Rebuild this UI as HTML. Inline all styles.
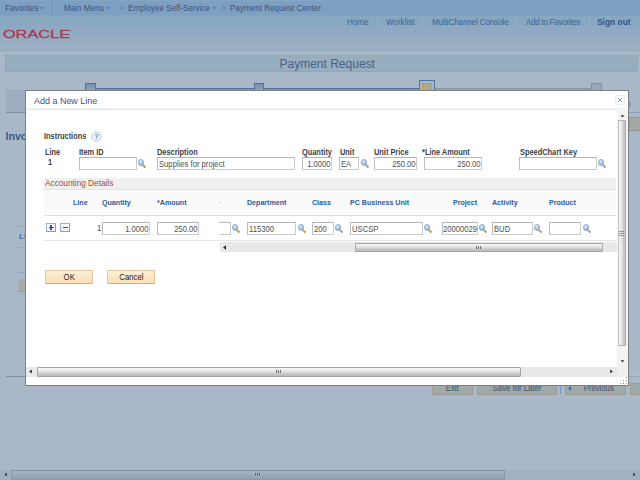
<!DOCTYPE html>
<html lang="en">
<head>
<meta charset="utf-8">
<title>Payment Request</title>
<style>
*{box-sizing:border-box;margin:0;padding:0}
html,body{width:640px;height:480px;overflow:hidden}
body{position:relative;background:#a9b8c8;font-family:"Liberation Sans",sans-serif;font-size:8px;color:#3c4656;line-height:1}
.a{position:absolute;white-space:nowrap}
/* ---------- dimmed page behind the dialog ---------- */
#top{left:0;top:0;width:640px;height:56px;background:linear-gradient(to bottom,
 #8ba8c6 0,#7fa1c3 1px,#7d9fc2 2px,#7d9fc2 14px,#80a2c2 15px,
 #87a8c0 16px,#87a8bf 25px,#8fa8c1 26px,#92a9c2 34px,
 #8eabc0 34px,#8eabc0 35px,#9aaac6 36px,#9aaac6 37px,
 #96adbf 37px,#96adbf 42px,#9bafc7 43px,#9bafc7 46px,#9eb0c7 47px,#9eb0c7 49px,
 #95b0be 49px,#95b0be 50px,#9aabb9 51px,#a9b8c9 52px,#a9b8c9 56px)}
#nav span{top:4.45px;font-size:8.8px;color:#40537a;transform:scaleX(.92);transform-origin:0 0}
#nav span.gt{transform:scale(.62,1.05);color:#54749f}
#hdr a{top:18.3px;font-size:8.8px;color:#3c6397;text-decoration:none;transform:scaleX(.915);transform-origin:0 0}
.sep{width:1px;background:#98aec6}
#title{left:5px;top:55px;width:633px;height:17px;background:#97aec0;border:1px solid #95a6ba}
#title h1{left:273.5px;top:2px;font-size:12px;font-weight:400;color:#486284}
.stop{width:11px;height:8px;top:83px;background:linear-gradient(#728fb0,#8ea4bd);border:1px solid #56749b;border-bottom:0}
.btn0{height:12px;top:383px;background:#9ea9a9;border:1px solid #a09b92;font-size:8.6px;color:#3c5273;text-align:center;line-height:9px}
.btn0 span,.pb span{display:inline-block;transform:scaleX(.9)}
/* ---------- dialog ---------- */
#dlg{left:25px;top:90px;width:604px;height:296px;background:#fff;border:1px solid #808080}
#in{left:-26px;top:-91px;width:0;height:0}
#dlg h2{left:33.6px;top:95.6px;font-size:9.7px;font-weight:400;color:#36578b;transform:scaleX(.925);transform-origin:0 0}
.lbl{font-weight:700;font-size:8.6px;color:#3a3f48;transform:scaleX(.86);transform-origin:0 0;margin-top:-.4px}
.in{height:13px;background:#fff;border:1px solid #cbcbcb;border-top-color:#b4b4b4;border-left-color:#bebebe;font-size:8.4px;color:#505050;padding:1.8px .4px 0 .8px;overflow:hidden}
.r{text-align:right}
.in span{display:inline-block;transform:scaleX(.915);transform-origin:0 0}
.r span{transform-origin:100% 0}
.th{font-weight:700;font-size:7.8px;transform:scaleX(.91);transform-origin:0 0;color:#2d5b9c;top:199px}
.pb{height:14px;top:270px;background:linear-gradient(#fdf0da,#fbe4c3 60%,#fbe0bb);border:1px solid #e9c49c;border-bottom-color:#dfab7c;font-size:8.6px;color:#222;text-align:center;line-height:12px}
.lk{width:10px;height:10px}
.lk::before{content:"";position:absolute;box-sizing:border-box;left:5.3px;top:4.8px;width:5px;height:1.6px;background:linear-gradient(90deg,#d89c55 74%,#8a6a4a 82%);border-radius:.8px;transform:rotate(45deg);transform-origin:0 50%}
.lk::after{content:"";position:absolute;box-sizing:border-box;left:.65px;top:.85px;width:6.3px;height:6.3px;border-radius:50%;border:.8px solid #97adc6;background:radial-gradient(circle at 35% 30%,#e2f0fc,#9cc8f0 55%,#6aa6e2)}
.thumbh{height:9px;background:linear-gradient(#f7f7f7,#e6e6e8 40%,#c6c6c9 75%,#bdbdc0);border:1px solid #a4a4a8;border-radius:1px}
.grip{width:1px;height:3.4px;background:#6e6e6e;box-shadow:2px 0 #6e6e6e,4px 0 #6e6e6e}
</style>
</head>
<body>
<!-- top navigation + header -->
<div id="top" class="a"></div>
<div id="nav">
  <span class="a" style="left:5px">Favorites</span>
  <span class="a" style="left:63.6px">Main Menu</span>
  <span class="a gt" style="left:119.5px">&gt;</span>
  <span class="a" style="left:127.6px">Employee Self-Service</span>
  <span class="a gt" style="left:221.5px">&gt;</span>
  <span class="a" style="left:230.4px">Payment Request Center</span>
  <svg class="a" style="left:38.7px;top:7.4px" width="5" height="3"><path d="M.2 0h4.4L2.4 2.8z" fill="#557fb2"/></svg>
  <svg class="a" style="left:104.7px;top:7.4px" width="5" height="3"><path d="M.2 0h4.4L2.4 2.8z" fill="#557fb2"/></svg>
  <svg class="a" style="left:211.7px;top:7.4px" width="5" height="3"><path d="M.2 0h4.4L2.4 2.8z" fill="#557fb2"/></svg>
  <div class="a" style="left:52px;top:1px;width:1px;height:14px;background:#7091b7"></div>
  <div class="a" style="left:53px;top:1px;width:1px;height:14px;background:#8eabc9"></div>
</div>
<div id="hdr">
  <svg class="a" style="left:2px;top:27px" width="72" height="13" viewBox="0 0 72 13">
    <text x="0" y="0" transform="translate(0.9 10.8) scale(1.46 1)" font-family="Liberation Sans, sans-serif" font-size="11.2" fill="#a83850" stroke="#a83850" stroke-width=".28">ORACLE</text>
    <text x="67.6" y="4.6" font-family="Liberation Sans, sans-serif" font-size="3.2" fill="#a83850">®</text>
  </svg>
  <a class="a" style="left:347px">Home</a>
  <div class="a sep" style="left:377px;top:17px;height:9px"></div>
  <a class="a" style="left:386px">Worklist</a>
  <div class="a sep" style="left:422px;top:17px;height:9px"></div>
  <a class="a" style="left:432px;letter-spacing:-.12px">MultiChannel Console</a>
  <div class="a sep" style="left:516px;top:17px;height:9px"></div>
  <a class="a" style="left:525.5px;letter-spacing:-.3px">Add to Favorites</a>
  <div class="a sep" style="left:589px;top:17px;height:9px"></div>
  <a class="a" style="left:597px;font-weight:700;font-size:9.2px;color:#2f5590">Sign out</a>
</div>
<div id="title" class="a"><h1 class="a">Payment Request</h1></div>
<!-- train stops -->
<div class="a" style="left:90px;top:88px;width:330px;height:2px;background:linear-gradient(#4f709b 50%,#8198b5 50%)"></div>
<div class="a" style="left:435px;top:88px;width:165px;height:2px;background:linear-gradient(#8997a8 50%,#98a6b6 50%)"></div>
<div class="a stop" style="left:85px"></div>
<div class="a stop" style="left:254px;width:10px"></div>
<div class="a" style="left:419px;top:80px;width:16px;height:11px;background:#a9b8c8;border:1px solid #52739d"></div>
<div class="a" style="left:422px;top:83px;width:10px;height:8px;background:#b1a98c;border:1px solid #c39a48"></div>
<div class="a stop" style="left:591px;background:#95a9bc;border-color:#7d8fa4"></div>
<!-- page fragments visible left of dialog -->
<div class="a" style="left:6px;top:90px;width:20px;height:22px;background:#9daec1"></div>
<div class="a" style="left:6px;top:112px;width:20px;height:1px;background:#7e90a8"></div>
<div class="a" style="left:5.5px;top:130.8px;font-size:10.6px;font-weight:700;color:#3b5886">Invo</div>
<div class="a" style="left:18px;top:226px;width:8px;height:1px;background:#95a6b8"></div>
<div class="a" style="left:19px;top:233px;font-size:8px;font-weight:700;color:#456ca4">Li</div>
<div class="a" style="left:18px;top:247px;width:8px;height:1px;background:#95a6b8"></div>
<div class="a" style="left:18px;top:272px;width:8px;height:1px;background:#95a6b8"></div>
<div class="a" style="left:18px;top:279px;width:8px;height:13px;background:#a5aba8;border:1px solid #aeb1aa;border-bottom-color:#969c98"></div>
<div class="a" style="left:6px;top:376px;width:20px;height:1px;background:#7e90a8"></div>
<!-- page fragments right of dialog -->
<div class="a" style="left:629px;top:102px;width:1.5px;height:5px;background:#5d86b8;opacity:.6"></div>
<div class="a" style="left:629px;top:112px;width:11px;height:1px;background:#8a9db3"></div>
<div class="a" style="left:629px;top:117px;width:12px;height:14px;background:#a2a9a6;border:1px solid #8d9692"></div>
<div class="a" style="left:629px;top:373px;width:11px;height:3px;background:#acbccd"></div>
<div class="a" style="left:629px;top:376px;width:11px;height:1px;background:#94a8c0"></div>
<!-- page buttons under dialog -->
<div class="a btn0" style="left:432px;width:41px"><span>Exit</span></div>
<div class="a btn0" style="left:477px;width:80px"><span>Save for Later</span></div>
<div class="a" style="left:560px;top:385px;width:1px;height:9px;background:#7d97bd"></div>
<div class="a btn0" style="left:565px;width:61px;padding-left:6px"><span>Previous</span></div>
<div class="a btn0" style="left:630px;width:14px"></div>
<svg class="a" style="left:568px;top:386px" width="3" height="5"><path d="M3 0v5L0 2.5z" fill="#3f6cb0"/></svg>
<!-- page horizontal scrollbar -->
<div class="a" style="left:0;top:470px;width:640px;height:10px;background:#a1b1c2"></div>
<div class="a" style="left:11px;top:470px;width:494px;height:10px;background:linear-gradient(#a4b4c3,#9aacbc 45%,#8d9fb1);border:1px solid #8a9aab;border-top-color:#7f8f9e;border-radius:1px"></div>
<svg class="a" style="left:4px;top:472px" width="3" height="5"><path d="M2.8 .4v4.2L.2 2.5z" fill="#3a4350"/></svg>
<svg class="a" style="left:633px;top:472px" width="3" height="5"><path d="M.2 .4v4.2L2.8 2.5z" fill="#3a4350"/></svg>
<div class="a" style="left:254px;top:472px;width:7px;height:5px;background:#a3b2c1"></div>
<div class="a grip" style="left:255px;top:472.5px;background:#5c6874;box-shadow:2px 0 #5c6874,4px 0 #5c6874"></div>

<!-- ================= dialog ================= -->
<div id="dlg" class="a"><div id="in" class="a">
  <h2 class="a">Add a New Line</h2>
  <div class="a" style="left:615px;top:95px;width:10px;height:10px;border:1px solid #eceef0;border-radius:2px;background:#f6f7f8"></div>
  <svg class="a" style="left:617px;top:97px" width="6" height="6" viewBox="0 0 6 6"><path d="M1 1l4 4M5 1l-4 4" stroke="#8a9eb7" stroke-width="1" fill="none"/></svg>
  <div class="a" style="left:26px;top:108px;width:602px;height:1px;background:#f3f6f7"></div>
  <div class="a" style="left:26px;top:109px;width:591px;height:1px;background:#e2e8eb"></div>

  <!-- vertical scrollbar -->
  <div class="a" style="left:617px;top:109px;width:11px;height:258px;background:#f3f3f3"></div>
  <div class="a" style="left:617.5px;top:120px;width:8.5px;height:226px;background:linear-gradient(90deg,#f4f4f4,#e9e9eb 40%,#cacacd 75%,#c0c0c3);border:1px solid #b2b2b6;border-left-color:#c4c4c8;border-radius:1px"></div>
  <svg class="a" style="left:619.5px;top:114px" width="5" height="3"><path d="M.6 2.8h3.8L2.5 .5z" fill="#333"/></svg>
  <svg class="a" style="left:619.5px;top:359.5px" width="5" height="3"><path d="M.6 .2h3.8L2.5 2.5z" fill="#333"/></svg>
  <div class="a" style="left:619px;top:230.5px;width:4.5px;height:1px;background:#999;box-shadow:0 2px #999,0 4px #999"></div>
  <!-- horizontal scrollbar -->
  <div class="a" style="left:26px;top:367px;width:591px;height:10px;background:#e9e9e9"></div>
  <div class="a" style="left:617px;top:367px;width:11px;height:10px;background:#f0f0f0"></div>
  <div class="a thumbh" style="left:37px;top:366.7px;width:484px;height:10px"></div>
  <svg class="a" style="left:29px;top:369px" width="3" height="5"><path d="M2.8 .4v4.2L.2 2.5z" fill="#2c2c2c"/></svg>
  <svg class="a" style="left:610px;top:369px" width="3" height="5"><path d="M.2 .4v4.2L2.8 2.5z" fill="#2c2c2c"/></svg>
  <div class="a grip" style="left:276px;top:370px"></div>
  <!-- resize grip -->
  <svg class="a" style="left:620px;top:377px" width="8" height="8"><g fill="#9a9a9a"><rect x="6" y="0" width="1" height="1"/><rect x="3" y="3" width="1" height="1"/><rect x="6" y="3" width="1" height="1"/><rect x="0" y="6" width="1" height="1"/><rect x="3" y="6" width="1" height="1"/><rect x="6" y="6" width="1" height="1"/></g></svg>

  <!-- instructions -->
  <div class="a lbl" style="left:44px;top:132px">Instructions</div>
  <svg class="a" style="left:91px;top:130.5px" width="11" height="11" viewBox="0 0 11 11"><circle cx="5.5" cy="5.5" r="4.6" fill="#f3f7fb" stroke="#afc3da" stroke-width="1"/><text x="5.5" y="8.3" text-anchor="middle" font-family="Liberation Sans, sans-serif" font-size="7.5" font-weight="700" fill="#5b87b8">?</text></svg>

  <!-- line header fields -->
  <div class="a lbl" style="left:45px;top:148.5px">Line</div>
  <div class="a lbl" style="left:48px;top:158.3px">1</div>
  <div class="a lbl" style="left:79px;top:148.5px">Item ID</div>
  <div class="a in" style="left:79px;top:157px;width:58px"></div>
  <div class="a lbl" style="left:157px;top:148.5px">Description</div>
  <div class="a in" style="left:157px;top:157px;width:138px"><span>Supplies for project</span></div>
  <div class="a lbl" style="left:302px;top:148.5px">Quantity</div>
  <div class="a in r" style="left:302px;top:157px;width:30px"><span>1.0000</span></div>
  <div class="a lbl" style="left:340px;top:148.5px">Unit</div>
  <div class="a in" style="left:339px;top:157px;width:20px"><span>EA</span></div>
  <div class="a lbl" style="left:374px;top:148.5px">Unit Price</div>
  <div class="a in r" style="left:374px;top:157px;width:43px"><span>250.00</span></div>
  <div class="a lbl" style="left:422px;top:148.5px">*Line Amount</div>
  <div class="a in r" style="left:424px;top:157px;width:58px"><span>250.00</span></div>
  <div class="a lbl" style="left:520px;top:148.5px">SpeedChart Key</div>
  <div class="a in" style="left:519px;top:157px;width:78px"></div>

  <!-- accounting details -->
  <div class="a" style="left:44px;top:178px;width:572px;height:11px;background:#f0f0f0"></div>
  <div class="a" style="left:45px;top:180.4px;font-size:8.25px;color:#9e522b">Accounting Details</div>
  <div class="a" style="left:44px;top:189px;width:572px;height:1px;background:#e1e5e5"></div>
  <div class="a" style="left:44px;top:190px;width:572px;height:25px;background:#fafafa"></div>
  <div class="a" style="left:44px;top:215px;width:572px;height:1px;background:#dcdcdc"></div>
  <div class="a" style="left:44px;top:240px;width:572px;height:1px;background:#e4e4e4"></div>
  <div class="a th" style="left:73px">Line</div>
  <div class="a th" style="left:102px">Quantity</div>
  <div class="a th" style="left:157px">*Amount</div>
  <div class="a th" style="left:247px">Department</div>
  <div class="a th" style="left:312px">Class</div>
  <div class="a th" style="left:350px">PC Business Unit</div>
  <div class="a th" style="left:453px">Project</div>
  <div class="a th" style="left:492px">Activity</div>
  <div class="a th" style="left:549px">Product</div>
  <div class="a" style="left:219px;top:202px;width:1px;height:1px;background:#7fb0e0"></div>

  <!-- grid row -->
  <div class="a" style="left:46px;top:223px;width:10px;height:9px;border:1px solid #9db1c9;border-bottom-color:#8a9fb9;border-right-color:#8a9fb9;background:linear-gradient(#fbfcfe,#e9eff5)"></div>
  <div class="a" style="left:48.5px;top:227px;width:5px;height:1px;background:#2a5898"></div>
  <div class="a" style="left:50.4px;top:225px;width:1.3px;height:5px;background:#2a5898"></div>
  <div class="a" style="left:60px;top:223px;width:10px;height:9px;border:1px solid #9db1c9;border-bottom-color:#8a9fb9;border-right-color:#8a9fb9;background:linear-gradient(#fbfcfe,#e9eff5)"></div>
  <div class="a" style="left:62.5px;top:227px;width:5px;height:1px;background:#2a5898"></div>
  <div class="a" style="left:96.6px;top:224.4px;font-size:8.4px;color:#505050;transform:scaleX(.9);transform-origin:0 0">1</div>
  <div class="a in r" style="left:102px;top:222px;width:48px"><span>1.0000</span></div>
  <div class="a in r" style="left:157px;top:222px;width:42px"><span>250.00</span></div>
  <div class="a in" style="left:219px;top:222px;width:12px;border-left:0"></div>
  <div class="a in" style="left:247px;top:222px;width:49px"><span>115300</span></div>
  <div class="a in" style="left:312px;top:222px;width:22px"><span>200</span></div>
  <div class="a in" style="left:350px;top:222px;width:73px"><span>USCSP</span></div>
  <div class="a in" style="left:442px;top:222px;width:36px;padding-right:0;padding-left:0"><span>20000029</span></div>
  <div class="a in" style="left:492px;top:222px;width:41px"><span>BUD</span></div>
  <div class="a in" style="left:549px;top:222px;width:32px"></div>

  <!-- inner grid scrollbar -->
  <div class="a" style="left:219.5px;top:242.3px;width:397px;height:10.2px;background:#e8e8e8"></div>
  <div class="a thumbh" style="left:355px;top:243px;width:248px"></div>
  <svg class="a" style="left:223px;top:245px" width="3" height="5"><path d="M3 .3v4.4L0 2.5z" fill="#2a2a2a"/></svg>
  <div class="a grip" style="left:476px;top:246px"></div>

  <!-- buttons -->
  <div class="a pb" style="left:45px;width:48px"><span>OK</span></div>
  <div class="a pb" style="left:107px;width:48px"><span>Cancel</span></div>

  <!-- lookup icons -->
  <i class="a lk" style="left:137.1px;top:158.5px"></i>
  <i class="a lk" style="left:360.1px;top:158.5px"></i>
  <i class="a lk" style="left:597.1px;top:158.5px"></i>
  <i class="a lk" style="left:231.1px;top:223.5px"></i>
  <i class="a lk" style="left:297.1px;top:223.5px"></i>
  <i class="a lk" style="left:334.1px;top:223.5px"></i>
  <i class="a lk" style="left:423.1px;top:223.5px"></i>
  <i class="a lk" style="left:478.1px;top:223.5px"></i>
  <i class="a lk" style="left:533.1px;top:223.5px"></i>
  <i class="a lk" style="left:582.1px;top:223.5px"></i>
</div></div>
</body>
</html>
